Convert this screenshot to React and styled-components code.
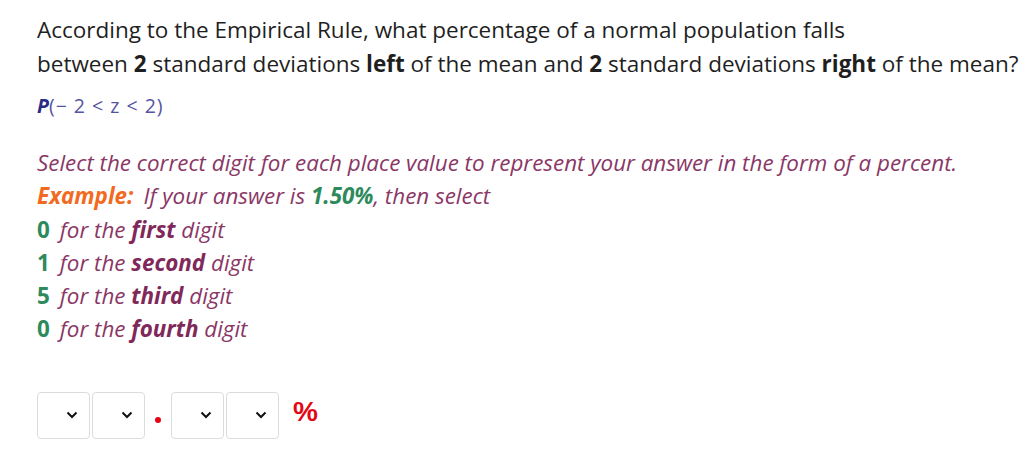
import React from "react";
import styled, { createGlobalStyle } from "styled-components";

const GlobalStyle = createGlobalStyle`
  body {
    margin: 0;
    background: #ffffff;
    font-family: "Open Sans", "Noto Sans", sans-serif;
  }
`;

const colors = {
  text: "#1f1f1f",
  navy: "#2b2b86",
  indigo: "#55559f",
  maroon: "#8a3766",
  maroonDark: "#80285a",
  orange: "#f26a1e",
  green: "#2e8a5c",
  red: "#e30613",
};

const Page = styled.div`
  padding: 13px 0 0 37px;
  color: ${colors.text};
`;

const Question = styled.p`
  margin: 0;
  font-size: 22.5px;
  line-height: 34px;
`;

const Formula = styled.div`
  margin-top: 13px;
  font-size: 19.5px;
  line-height: 24px;
  letter-spacing: 1px;
  color: ${colors.indigo};
`;

const Prob = styled.span`
  font-weight: 700;
  font-style: italic;
  letter-spacing: 0;
  color: ${colors.navy};
`;

const Instructions = styled.div`
  margin-top: 28px;
  font-size: 22.4px;
  line-height: 33.3px;
  font-style: italic;
  color: ${colors.maroon};
`;

const Line = styled.div``;

const Label = styled.span`
  font-weight: 700;
  color: ${colors.orange};
  margin-right: 10px;
`;

const Good = styled.span`
  font-weight: 700;
  color: ${colors.green};
`;

const Digit = styled.span`
  font-weight: 700;
  font-style: normal;
  color: ${colors.green};
  margin-right: 10px;
`;

const Place = styled.b`
  font-weight: 700;
  color: ${colors.maroonDark};
`;

const AnswerRow = styled.div`
  margin-top: 46px;
  display: flex;
  align-items: center;
  gap: 2px;
`;

const SelectBox = styled.div`
  width: 53px;
  height: 47px;
  box-sizing: border-box;
  border: 1px solid #dcdcdc;
  border-radius: 4px;
  display: flex;
  align-items: center;
  justify-content: flex-end;
  padding-right: 11px;
  background: #fff;
`;

const Dot = styled.span`
  width: 6px;
  height: 6px;
  border-radius: 50%;
  background: ${colors.red};
  margin: 10px 8px 0 8px;
`;

const Percent = styled.span`
  margin-left: 12px;
  font-family: "Liberation Sans", Arial, sans-serif;
  font-weight: 700;
  font-size: 28px;
  color: ${colors.red};
  margin-top: -6px;
`;

const Chevron = () => (
  <svg width="12" height="8" viewBox="0 0 12 8" fill="none">
    <path d="M1.5 1.5L6 6l4.5-4.5" stroke="#111" strokeWidth="2" />
  </svg>
);

const Select = () => (
  <SelectBox>
    <Chevron />
  </SelectBox>
);

const places = [
  ["0", "first"],
  ["1", "second"],
  ["5", "third"],
  ["0", "fourth"],
];

export default function App() {
  return (
    <Page>
      <GlobalStyle />
      <Question>
        According to the Empirical Rule, what percentage of a normal population falls
        <br />
        between <b>2</b> standard deviations <b>left</b> of the mean and <b>2</b> standard
        deviations <b>right</b> of the mean?
      </Question>
      <Formula>
        <Prob>P</Prob>(− 2 &lt; z &lt; 2)
      </Formula>
      <Instructions>
        <Line>
          Select the correct digit for each place value to represent your answer in the form of a
          percent.
        </Line>
        <Line>
          <Label>Example:</Label>If your answer is <Good>1.50%</Good>, then select
        </Line>
        {places.map(([d, p]) => (
          <Line key={p}>
            <Digit>{d}</Digit>for the <Place>{p}</Place> digit
          </Line>
        ))}
      </Instructions>
      <AnswerRow>
        <Select />
        <Select />
        <Dot />
        <Select />
        <Select />
        <Percent>%</Percent>
      </AnswerRow>
    </Page>
  );
}
